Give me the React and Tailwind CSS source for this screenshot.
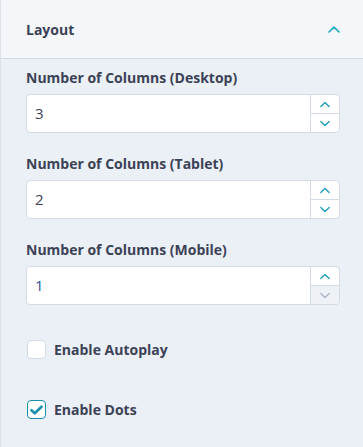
import { useState } from "react";

const fields = [
  { key: "desktop", label: "Number of Columns (Desktop)", value: 3 },
  { key: "tablet", label: "Number of Columns (Tablet)", value: 2 },
  { key: "mobile", label: "Number of Columns (Mobile)", value: 1 },
];

function Chevron({ up, className }) {
  return (
    <svg width="12" height="7" viewBox="0 0 12 7" fill="none" className={className}>
      <path
        d={up ? "M1 6L6 1.2L11 6" : "M1 1L6 5.8L11 1"}
        stroke="currentColor"
        strokeWidth="1.6"
        strokeLinecap="round"
        strokeLinejoin="round"
      />
    </svg>
  );
}

function NumberField({ label, value, onChange, focused }) {
  const atMin = value <= 1;
  return (
    <div>
      <label className="block text-[14px] font-bold leading-4 text-[#3b4256]">{label}</label>
      <div className="mt-[8px] flex h-[39px] overflow-hidden rounded-[4px] border border-[#d5dbe5] bg-white">
        <div
          className={`flex flex-1 items-center pl-[8px] text-[15px] ${
            focused ? "text-[#2c5490]" : "text-[#3b4256]"
          }`}
        >
          {value}
        </div>
        <div className="flex w-[29px] flex-col border-l border-[#d5dbe5]">
          <button
            onClick={() => onChange(value + 1)}
            className="flex flex-1 items-center justify-center border-b border-[#d5dbe5] text-[#1a9cb8]"
          >
            <Chevron up className="w-[10px]" />
          </button>
          <button
            onClick={() => onChange(Math.max(1, value - 1))}
            className={`flex flex-1 items-center justify-center ${
              atMin ? "bg-[#eef1f6] text-[#a9b3c4]" : "text-[#1a9cb8]"
            }`}
          >
            <Chevron className="w-[10px]" />
          </button>
        </div>
      </div>
    </div>
  );
}

function Checkbox({ label, checked, onToggle }) {
  return (
    <button onClick={onToggle} className="flex items-center gap-[8px]">
      <span
        className={`flex h-[19px] w-[19px] items-center justify-center rounded-[4px] border bg-white ${
          checked ? "border-[#1a8fac] border-[1.5px]" : "border-[#d5dbe5]"
        }`}
      >
        {checked && (
          <svg width="13" height="10" viewBox="0 0 13 10" fill="none">
            <path d="M1.5 5.2L4.8 8.3L11.5 1.7" stroke="#1a8fac" strokeWidth="2.6" strokeLinecap="round" strokeLinejoin="round" />
          </svg>
        )}
      </span>
      <span className="text-[14px] font-bold leading-[19px] text-[#3b4256]">{label}</span>
    </button>
  );
}

export default function App() {
  const [values, setValues] = useState({ desktop: 3, tablet: 2, mobile: 1 });
  const [autoplay, setAutoplay] = useState(false);
  const [dots, setDots] = useState(true);

  return (
    <div className="h-[447px] w-[363px] border-l border-[#dde2ea] bg-[#ebeff6] font-['Open_Sans',sans-serif]">
      <div className="flex h-[59px] items-center justify-between border-b border-[#d3d9e4] bg-[#f4f6fa] pl-[25px] pr-[23px]">
        <span className="text-[14px] font-bold text-[#3b4256]">Layout</span>
        <Chevron up className="text-[#1fa7c4]" />
      </div>
      <div className="flex flex-col gap-[23px] pl-[25px] pr-[23px] pt-[11px]">
        {fields.map((f) => (
          <NumberField
            key={f.key}
            label={f.label}
            value={values[f.key]}
            focused={f.key === "mobile"}
            onChange={(v) => setValues((prev) => ({ ...prev, [f.key]: v }))}
          />
        ))}
      </div>
      <div className="flex flex-col gap-[41px] px-[26px] pt-[35px]">
        <Checkbox label="Enable Autoplay" checked={autoplay} onToggle={() => setAutoplay((a) => !a)} />
        <Checkbox label="Enable Dots" checked={dots} onToggle={() => setDots((d) => !d)} />
      </div>
    </div>
  );
}
